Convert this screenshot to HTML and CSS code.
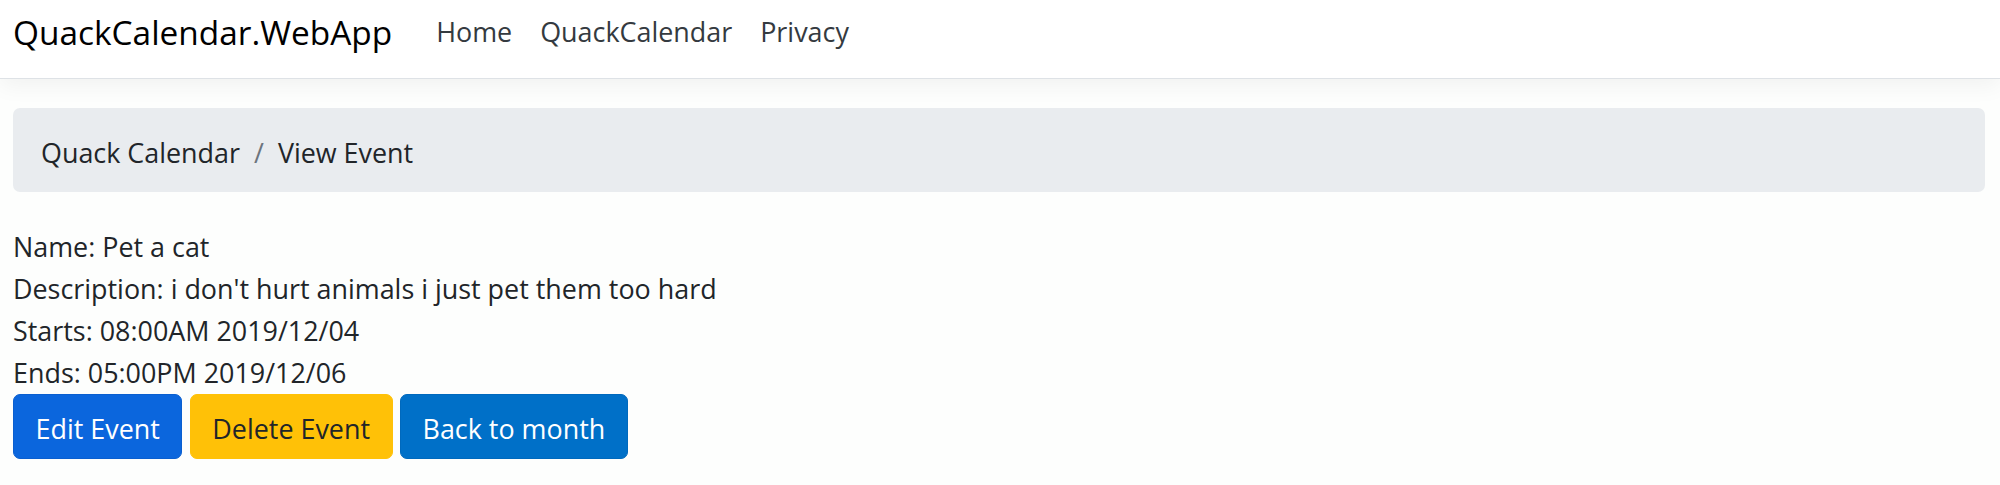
FILE: index.html
```html
<!DOCTYPE html>
<html lang="en">
<head>
<meta charset="utf-8">
<title>View Event - QuackCalendar.WebApp</title>
<link rel="stylesheet" href="styles.css">
</head>
<body>
<header class="topbar">
  <nav class="nav">
    <a class="brand" href="#">QuackCalendar.WebApp</a>
    <ul class="links">
      <li><a href="#">Home</a></li>
      <li><a href="#">QuackCalendar</a></li>
      <li><a href="#">Privacy</a></li>
    </ul>
  </nav>
</header>
<main class="main">
  <ol class="crumbs">
    <li class="crumb">Quack Calendar</li>
    <li class="sep">/</li>
    <li class="crumb">View Event</li>
  </ol>
  <div class="details">
    <div>Name: Pet a cat</div>
    <div>Description: i don't hurt animals i just pet them too hard</div>
    <div>Starts: 08:00AM 2019/12/04</div>
    <div>Ends: 05:00PM 2019/12/06</div>
  </div>
  <div class="actions">
    <button class="btn btn-edit">Edit Event</button>
    <button class="btn btn-delete">Delete Event</button>
    <button class="btn btn-back">Back to month</button>
  </div>
</main>
</body>
</html>
```

FILE: styles.css
```css
html, body { margin: 0; padding: 0; }
body {
  background: #fdfefd;
  color: #212529;
  font-family: "Open Sans", sans-serif;
  font-size: 26.9px;
  line-height: 42px;
}
.topbar {
  background: #ffffff;
  height: 78px;
  border-bottom: 1px solid #dee2e6;
  box-shadow: 0 7px 21px rgba(0,0,0,0.05);
}
.nav {
  display: flex;
  align-items: center;
  height: 63px;
  padding-left: 13px;
}
.brand {
  font-size: 33.4px;
  color: #000000;
  text-decoration: none;
  margin-right: 30px;
}
.links {
  display: flex;
  list-style: none;
  margin: 0;
  padding: 0;
}
.links a {
  display: block;
  padding: 0 14px;
  color: #343a40;
  text-decoration: none;
}
.main {
  padding: 29px 15px 0 13px;
}
.crumbs {
  display: flex;
  list-style: none;
  margin: 0 0 34px;
  padding: 24px 28px 18px;
  background: #e9ecef;
  border-radius: 7px;
}
.sep { color: #6c757d; padding: 0 14px; }
.actions { display: flex; gap: 7.5px; }
.btn {
  font: inherit;
  line-height: 42px;
  padding: 12.5px 21.5px 8.5px;
  border: 1.75px solid transparent;
  border-radius: 7px;
  color: #fff;
}
.btn-edit { background: #0b66dd; border-color: #0a5fd0; }
.btn-delete { background: #ffc107; border-color: #ffc107; color: #212529; }
.btn-back { background: #0070c8; border-color: #0069bd; }
```
